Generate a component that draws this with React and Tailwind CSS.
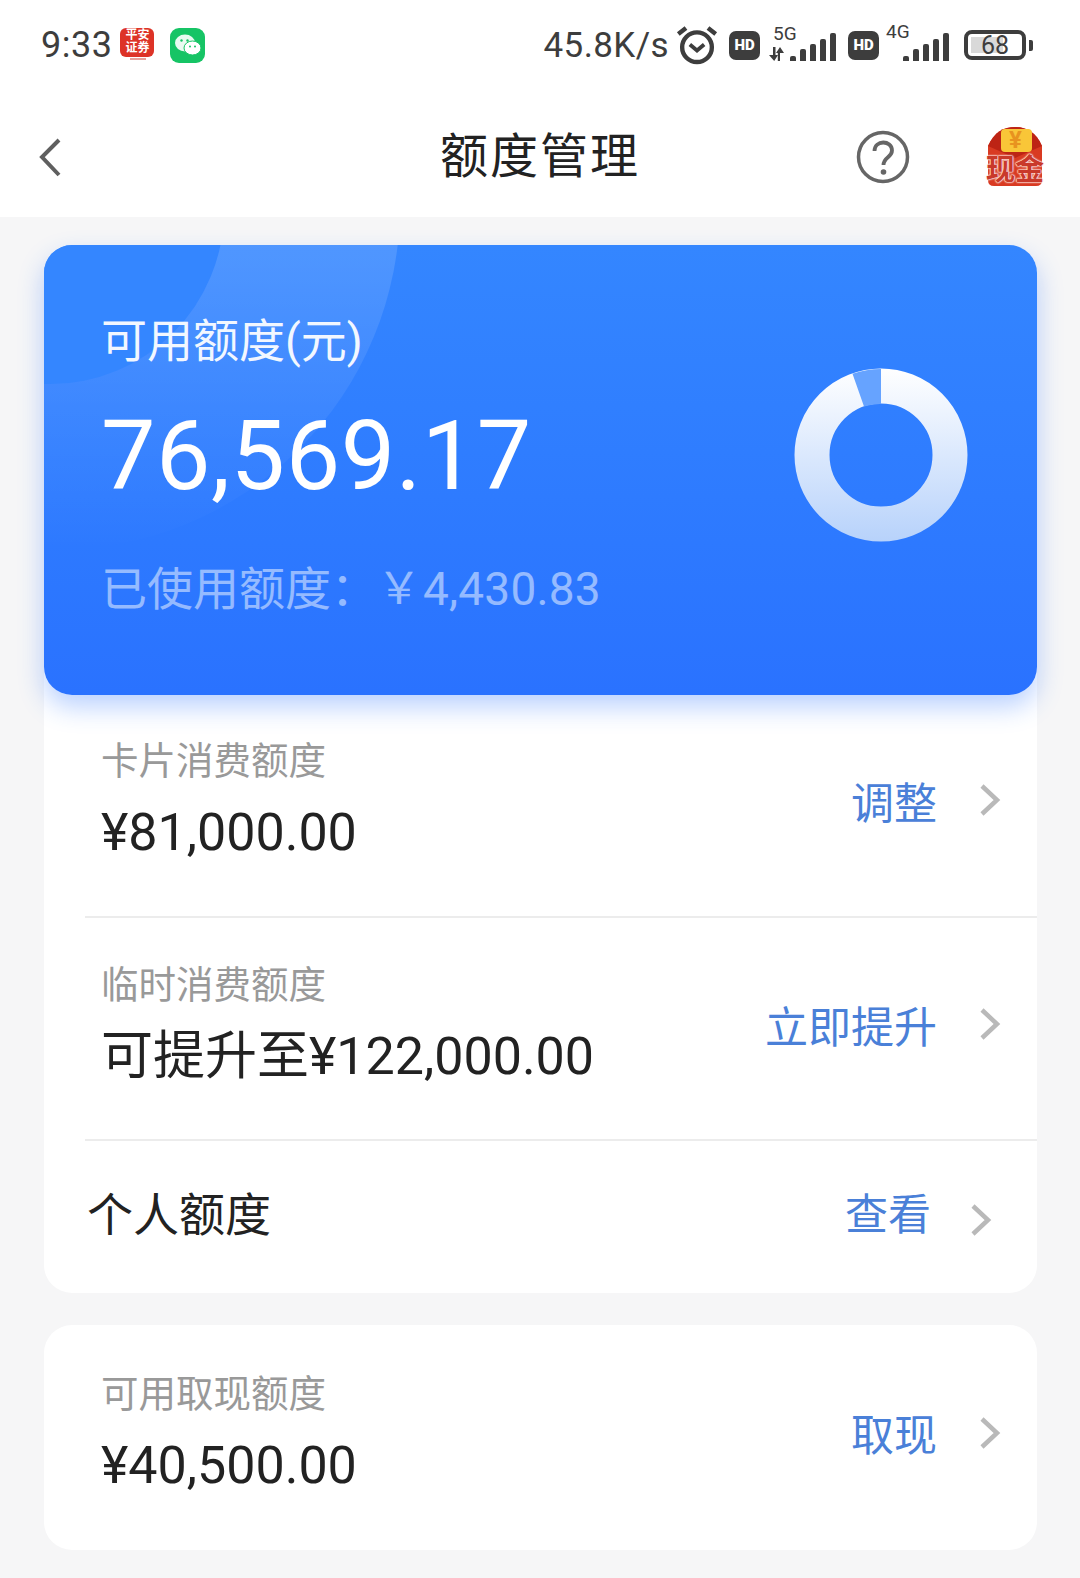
const cjk = "font-['Roboto','Noto_Sans_CJK_SC',sans-serif]";

function Chevron({ className = "" }) {
    return (
        <svg width="22" height="34" viewBox="0 0 22 34" className={className} fill="none">
            <path d="M3 3 L18 17 L3 31" stroke="#b9b9b9" strokeWidth="4.5" />
        </svg>
    );
}

function Signal({ bars }) {
    const heights = [5, 12, 17, 22, 28];
    return (
        <div className="flex items-end gap-[4px] h-[28px]">
            {heights.slice(5 - bars).map((h, i) => (
                <div key={i} className="w-[6px] rounded-t-[2px] bg-[#3d3d3d]" style={{ height: h }}></div>
            ))}
        </div>
    );
}

function Hd() {
    return (
        <div className="w-[31px] h-[29px] rounded-[7px] bg-[#3d3d3d] text-white flex items-center justify-center text-[15px] font-black font-['Roboto',sans-serif]">
            HD
        </div>
    );
}

function StatusBar() {
    return (
        <div className="h-[90px] flex items-center pl-[41px] pr-[47px] text-[#3d3d3d] font-['Roboto',sans-serif]">
            <span className="text-[36px] tracking-[0.5px] leading-none">9:33</span>
            <div className="ml-[8px] w-[35px] h-[35px]">
                <div className={`w-[34px] h-[29px] rounded-[6px] bg-[#dd3327] text-white text-[12px] leading-[13px] font-bold flex items-center justify-center text-center ${cjk}`}>
                    平安<br />证券
                </div>
                <div className="mx-auto mt-[1px] w-[16px] h-[2px] bg-[#e8a09a]"></div>
            </div>
            <div className="ml-[15px] w-[35px] h-[35px] rounded-[9px] bg-[#16c465] flex items-center justify-center">
                <svg width="28" height="25" viewBox="0 0 28 25">
                    <ellipse cx="11" cy="10" rx="10" ry="8.5" fill="#eafaf1" />
                    <ellipse cx="18.5" cy="15" rx="8.5" ry="7" fill="#ffffff" stroke="#16c465" strokeWidth="1" />
                    <circle cx="7.5" cy="7.5" r="1.2" fill="#16c465" />
                    <circle cx="13.5" cy="7.5" r="1.2" fill="#16c465" />
                    <circle cx="16" cy="13.5" r="1" fill="#16c465" />
                    <circle cx="21" cy="13.5" r="1" fill="#16c465" />
                </svg>
            </div>
            <span className="ml-auto text-[35px] tracking-[0.4px] leading-none">45.8K/s</span>
            <svg width="44" height="40" viewBox="0 0 40 36" className="ml-[6px]" fill="none" stroke="#3d3d3d">
                <circle cx="20" cy="20" r="13.5" strokeWidth="4" />
                <path d="M13.5 17.5 L20 23 L26.5 17.5" strokeWidth="3.5" />
                <path d="M3 8 L10 2.5 M37 8 L30 2.5" strokeWidth="4" />
            </svg>
            <div className="ml-[10px]"><Hd /></div>
            <div className="ml-[9px] relative w-[67px] h-[28px] mt-[4px] flex items-end justify-end">
                <span className="absolute left-[4px] top-[-9px] text-[19px] leading-none">5G</span>
                <svg width="15" height="14" viewBox="0 0 15 14" className="absolute left-0 bottom-0" fill="#3d3d3d">
                    <path d="M4 0 H6.5 V8 H9 L5.2 14 L0 8 H4 Z" />
                    <path d="M11 14 H8.8 V6 H7 L11 0 L15 6 H11 Z" />
                </svg>
                <Signal bars={5} />
            </div>
            <div className="ml-[12px]"><Hd /></div>
            <div className="ml-[7px] relative w-[63px] h-[28px] mt-[4px] flex items-end justify-end">
                <span className="absolute left-0 top-[-11px] text-[19px] leading-none">4G</span>
                <Signal bars={5} />
            </div>
            <div className="ml-[15px] w-[62px] h-[30px] rounded-[8px] border-[4px] border-[#3d3d3d] p-[3px] relative">
                <div className="h-full w-[32px] bg-[#d9d9d9]"></div>
                <span className="absolute inset-0 flex items-center justify-center text-[25px] leading-none">68</span>
            </div>
            <div className="ml-[3px] w-[4px] h-[11px] rounded-r-[2px] bg-[#3d3d3d]"></div>
        </div>
    );
}

function NavBar() {
    return (
        <div className="h-[127px] pt-[7px] grid grid-cols-[1fr_auto_1fr] items-center">
            <svg width="24" height="40" viewBox="0 0 24 40" fill="none" className="ml-[38px]">
                <path d="M21 3 L4 20 L21 38" stroke="#5f5f5f" strokeWidth="4" />
            </svg>
            <h1 className={`text-[48px] leading-none tracking-[2px] text-[#222] ${cjk}`}>额度管理</h1>
            <div className="flex items-center justify-end pr-[36px]">
                <svg width="54" height="54" viewBox="0 0 54 54" fill="none" className="mr-[76px]">
                    <circle cx="27" cy="27" r="24.5" stroke="#666" strokeWidth="3.5" />
                    <path d="M18.5 21 C18.5 9.5 36 10 36 20.5 C36 27.5 27.5 27 27.5 35" stroke="#666" strokeWidth="3.8" />
                    <circle cx="27.5" cy="42" r="2.8" fill="#666" />
                </svg>
                <div className="w-[58px] h-[62px] relative">
                    <svg width="58" height="62" viewBox="0 0 58 62">
                        <path d="M2 20 C8 6 18 1 29 1 C40 1 50 6 56 20 L56 54 Q56 60 50 60 L8 60 Q2 60 2 54 Z" fill="#d93a22" />
                        <path d="M2 20 C8 6 18 1 29 1 C40 1 50 6 56 20 L29 32 Z" fill="#bd2415" />
                        <rect x="15" y="3" width="31" height="23" rx="4" fill="#f9c638" />
                    </svg>
                    <span className={`absolute left-[1px] right-0 top-[2px] text-center text-[24px] leading-[24px] font-bold text-[#e8931f] ${cjk}`}>¥</span>
                    <span className={`absolute left-0 top-[28px] w-[58px] text-center text-[29px] leading-[32px] font-bold text-[#c9392a] whitespace-nowrap [text-shadow:0_0_2px_#ffe9e4,0_0_2px_#ffe9e4,0_0_2px_#ffe9e4,0_0_1px_#fff] ${cjk}`}>现金</span>
                </div>
            </div>
        </div>
    );
}

function Donut() {
    return (
        <svg width="174" height="174" viewBox="0 0 174 174" fill="none">
            <defs>
                <linearGradient id="ring" x1="0" y1="0" x2="0" y2="174" gradientUnits="userSpaceOnUse">
                    <stop offset="0" stopColor="#ffffff" />
                    <stop offset="1" stopColor="#b7d2fb" />
                </linearGradient>
            </defs>
            <circle cx="87" cy="87" r="69" stroke="url(#ring)" strokeWidth="35" />
            <path d="M87 1 L87 36 A51 51 0 0 0 70 38.5 L58.5 5.8 A86 86 0 0 1 87 1 Z" fill="#66a3ff" />
        </svg>
    );
}

function BalanceCard() {
    return (
        <div className="relative h-[450px] rounded-[28px] overflow-hidden bg-gradient-to-b from-[#3486ff] to-[#2a72ff] shadow-[0_12px_26px_rgba(42,114,255,0.32)] flex items-center justify-between pl-[57px] pr-[69px]">
            <div className="absolute left-[-334px] top-[-385px] w-[690px] h-[690px] rounded-full bg-gradient-to-b from-white/14 from-55% to-white/0"></div>
            <div className="absolute left-[-168px] top-[-209px] w-[348px] h-[348px] rounded-full bg-[#3486ff]"></div>
            <div className="relative self-start pt-[66px] text-white">
                <div className={`text-[46px] leading-[60px] text-[#f2f7ff] ${cjk}`}>可用额度(元)</div>
                <div className="mt-[30px] text-[97px] leading-[110px] tracking-[0.5px] font-['Roboto',sans-serif]">76,569.17</div>
                <div className={`mt-[48px] text-[46px] leading-[60px] text-white/50 flex items-center whitespace-nowrap ${cjk}`}>
                    已使用额度：<span className="text-[44px]">￥</span><span className="ml-[2px] tracking-[0.2px]">4,430.83</span>
                </div>
            </div>
            <div className="relative -mt-[30px]"><Donut /></div>
        </div>
    );
}

function AmountRow({ label, amount, action, className = "" }) {
    return (
        <div className={`flex items-center justify-between pl-[57px] pr-[36px] ${className}`}>
            <div className={`pb-[8px] ${cjk}`}>
                <div className="text-[37.5px] leading-[48px] text-[#999]">{label}</div>
                <div className="mt-[23px] text-[52px] leading-[50px] text-[#222]">{amount}</div>
            </div>
            <div className="flex items-center gap-[42px]">
                <span className={`mt-[5px] text-[43px] leading-none text-[#4a80d8] ${cjk}`}>{action}</span>
                <Chevron className="mb-[3px]" />
            </div>
        </div>
    );
}

export default function App() {
    return (
        <div className="w-[1080px] h-[1578px] overflow-hidden bg-[#f6f6f7]">
            <div className="bg-white">
                <StatusBar />
                <NavBar />
            </div>
            <div className="pt-[28px] pl-[44px] pr-[43px] flex flex-col gap-[32px]">
                <div className="bg-white rounded-[28px]">
                    <BalanceCard />
                    <AmountRow label="卡片消费额度" amount="¥81,000.00" action="调整" className="h-[221px] pb-[8px]" />
                    <div className="ml-[41px] h-[2px] bg-[#ececec]"></div>
                    <AmountRow label="临时消费额度" amount="可提升至¥122,000.00" action="立即提升" className="h-[221px] pb-[6px]" />
                    <div className="ml-[41px] h-[2px] bg-[#ececec]"></div>
                    <div className="h-[152px] pb-[4px] flex items-center justify-between pl-[43px] pr-[45px]">
                        <span className={`text-[46px] leading-none text-[#222] ${cjk}`}>个人额度</span>
                        <div className="flex items-center gap-[39px]">
                            <span className={`text-[43px] leading-none text-[#4a80d8] ${cjk}`}>查看</span>
                            <Chevron className="mt-[10px]" />
                        </div>
                    </div>
                </div>
                <div className="bg-white rounded-[28px]">
                    <AmountRow label="可用取现额度" amount="¥40,500.00" action="取现" className="h-[225px] pb-[7px]" />
                </div>
            </div>
        </div>
    );
}
